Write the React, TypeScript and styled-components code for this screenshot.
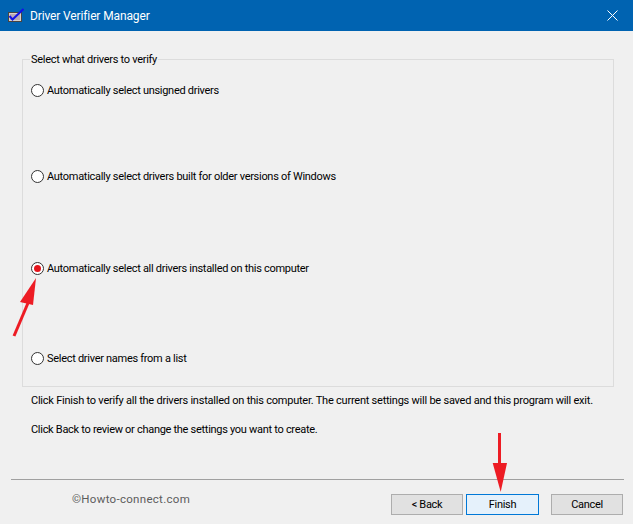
import React from "react";
import styled, { createGlobalStyle } from "styled-components";

const Global = createGlobalStyle`
  html, body { margin: 0; padding: 0; background: #f0f0f0; }
  body { font-family: Roboto, "Liberation Sans", sans-serif; }
`;

const Window = styled.div`
  position: relative;
  width: 633px;
  height: 524px;
  overflow: hidden;
  background: #f0f0f0;
  display: flex;
  flex-direction: column;
  font-size: 11px;
  letter-spacing: -0.29px;
  color: #000;
`;

const TitleBar = styled.div`
  height: 31px;
  background: #0063b1;
  display: flex;
  align-items: center;
  padding: 0 15px 0 8px;
  gap: 6px;
  color: #fff;
  font-size: 12px;
  letter-spacing: -0.13px;
`;

const TitleText = styled.span`
  flex: 1;
`;

const Group = styled.fieldset`
  margin: 21px 19px 0 22px;
  padding: 0 0 0 8px;
  height: 335px;
  box-sizing: border-box;
  border: 1px solid #dcdcdc;
  display: flex;
  flex-direction: column;
  min-width: 0;
`;

const Legend = styled.legend`
  padding: 0 1px;
  margin-left: -1px;
  line-height: 15px;
`;

const Option = styled.label<{ $top: number }>`
  display: flex;
  align-items: center;
  gap: 3px;
  height: 16px;
  margin-top: ${(p) => p.$top}px;
  line-height: 16px;
`;

const OptionText = styled.span`
  padding-top: 1px;
`;

const Radio = styled.span<{ $on?: boolean }>`
  width: 13px;
  height: 13px;
  box-sizing: border-box;
  border-radius: 50%;
  border: 1px solid #333;
  background: #fff;
  display: flex;
  align-items: center;
  justify-content: center;
  flex: none;
  &::after {
    content: "";
    display: ${(p) => (p.$on ? "block" : "none")};
    width: 7px;
    height: 7px;
    border-radius: 50%;
    background: #e5141c;
  }
`;

const Notes = styled.div`
  margin: 6px 0 0 31px;
  display: flex;
  flex-direction: column;
  gap: 13px;
  line-height: 16px;
`;

const Note = styled.span<{ $tracking: number }>`
  letter-spacing: ${(p) => p.$tracking}px;
`;

const Separator = styled.div`
  margin: 41px 9px 0 11px;
  height: 1px;
  background: #a0a0a0;
`;

const Footer = styled.div`
  display: flex;
  align-items: flex-start;
  padding: 14px 10px 0 72px;
`;

const Copyright = styled.span`
  flex: 1;
  color: #5c5c5c;
  font-size: 11.5px;
  line-height: 12px;
  letter-spacing: 0.3px;
  margin-top: -1px;
`;

const Button = styled.div<{ $primary?: boolean; $ml?: number }>`
  width: ${(p) => (p.$primary ? 73 : 72)}px;
  height: 21px;
  box-sizing: border-box;
  margin-left: ${(p) => p.$ml ?? 0}px;
  display: flex;
  align-items: center;
  justify-content: center;
  background: ${(p) => (p.$primary ? "#e5f1fb" : "#e1e1e1")};
  border: 1px solid ${(p) => (p.$primary ? "#0078d7" : "#adadad")};
`;

const Arrow = styled.svg<{ $left: number; $top: number }>`
  position: absolute;
  left: ${(p) => p.$left}px;
  top: ${(p) => p.$top}px;
  pointer-events: none;
`;

const AppIcon = () => (
  <svg width="16" height="15" viewBox="0 0 16 15">
    <rect x="0.5" y="4.5" width="13" height="9" fill="#d9d2cc" stroke="#4a4440" />
    <rect x="2" y="6" width="10" height="6" fill="#b9a9b4" />
    <path d="M1.5 8 L4.5 11.5 L15.5 1" fill="none" stroke="#1212e8" strokeWidth="2" />
  </svg>
);

const CloseIcon = () => (
  <svg width="11" height="11" viewBox="0 0 11 11">
    <path d="M0.5 0.5 L10.5 10.5 M10.5 0.5 L0.5 10.5" stroke="#fff" strokeWidth="1" />
  </svg>
);

export default function App() {
  return (
    <Window>
      <Global />
      <TitleBar>
        <AppIcon />
        <TitleText>Driver Verifier Manager</TitleText>
        <CloseIcon />
      </TitleBar>
      <Group>
        <Legend>Select what drivers to verify</Legend>
        <Option $top={15}>
          <Radio />
          <OptionText>Automatically select unsigned drivers</OptionText>
        </Option>
        <Option $top={70}>
          <Radio />
          <OptionText>Automatically select drivers built for older versions of Windows</OptionText>
        </Option>
        <Option $top={76}>
          <Radio $on />
          <OptionText>Automatically select all drivers installed on this computer</OptionText>
        </Option>
        <Option $top={74}>
          <Radio />
          <OptionText>Select driver names from a list</OptionText>
        </Option>
      </Group>
      <Notes>
        <Note $tracking={-0.23}>Click Finish to verify all the drivers installed on this computer. The current settings will be saved and this program will exit.</Note>
        <Note $tracking={-0.29}>Click Back to review or change the settings you want to create.</Note>
      </Notes>
      <Separator />
      <Footer>
        <Copyright>©Howto-connect.com</Copyright>
        <Button>&lt; Back</Button>
        <Button $primary $ml={3}>Finish</Button>
        <Button $ml={12}>Cancel</Button>
      </Footer>
      <Arrow $left={10} $top={276} width="30" height="64" viewBox="0 0 30 64">
        <path d="M4 60 L18 27" stroke="#ed1c24" strokeWidth="3" fill="none" />
        <path d="M26 2 L10 26 L23 29 Z" fill="#ed1c24" />
      </Arrow>
      <Arrow $left={490} $top={432} width="20" height="62" viewBox="0 0 20 62">
        <path d="M9.5 1 V32" stroke="#ed1c24" strokeWidth="3" fill="none" />
        <path d="M2.7 31 H17 L10.7 60 Z" fill="#ed1c24" />
      </Arrow>
    </Window>
  );
}
